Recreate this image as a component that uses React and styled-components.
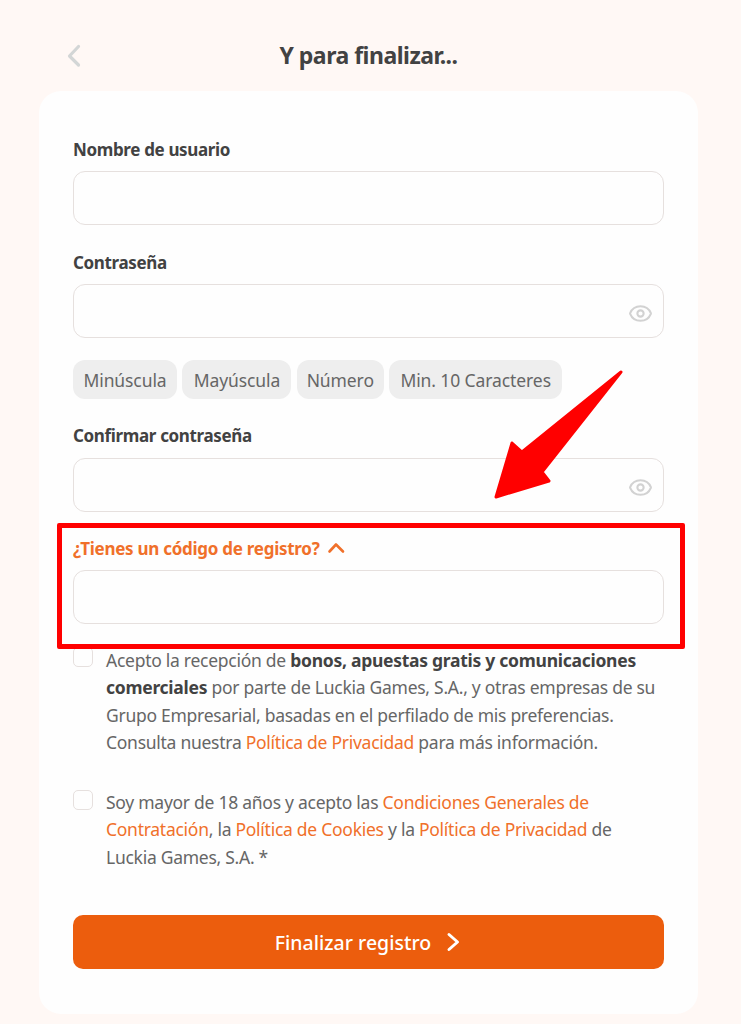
import React from "react";
import styled, { createGlobalStyle } from "styled-components";
import { Eye } from "lucide-react";

const colors = {
  page: "#fff8f5",
  card: "#fefefe",
  text: "#424242",
  muted: "#666666",
  line: "#e6e0de",
  orange: "#ec5d0d",
  link: "#f0702a",
  red: "#ff0000",
};

const GlobalStyle = createGlobalStyle`
  html, body {
    margin: 0;
    padding: 0;
    background: ${colors.page};
  }
  * {
    box-sizing: border-box;
  }
`;

const Page = styled.div`
  position: relative;
  width: 741px;
  height: 1024px;
  overflow: hidden;
  padding: 0 43px 10px 39px;
  font-family: "Noto Sans", "Liberation Sans", sans-serif;
  color: ${colors.text};
`;

const Header = styled.header`
  position: relative;
  height: 91px;
  padding-top: 38px;
  text-align: center;
`;

const BackIcon = styled.svg`
  position: absolute;
  left: 26px;
  top: 43px;
`;

const Title = styled.h1`
  margin: 0;
  font-size: 23px;
  line-height: 34px;
  font-weight: 700;
  letter-spacing: -0.5px;
`;

const Card = styled.main`
  height: 923px;
  background: ${colors.card};
  border-radius: 22px;
  padding: 47px 34px 0;
`;

const Label = styled.label`
  display: block;
  font-size: 17px;
  line-height: 24px;
  font-weight: 700;
  letter-spacing: -0.35px;
  margin-bottom: ${(p) => p.$gap || 9}px;
`;

const Field = styled.div`
  position: relative;
  margin-bottom: ${(p) => p.$after || 0}px;
`;

const Input = styled.input`
  display: block;
  width: 100%;
  height: 54px;
  background: ${colors.card};
  border: 1.5px solid ${colors.line};
  border-radius: 12px;
  outline: none;
`;

const EyeIcon = styled(Eye)`
  position: absolute;
  right: 11px;
  top: 17px;
  color: #d2d2d2;
`;

const Chips = styled.div`
  display: flex;
  gap: 5.4px;
  margin: 22px 0 25px;
`;

const Chip = styled.span`
  height: 39px;
  width: ${(p) => p.$w}px;
  display: flex;
  align-items: center;
  justify-content: center;
  background: #eeeeee;
  border-radius: 12px;
  font-size: 17.5px;
  color: ${colors.muted};
  letter-spacing: -0.1px;
`;

const Toggle = styled.div`
  display: flex;
  align-items: center;
  gap: 7px;
  height: 24px;
  margin: 24px 0 10px;
  font-size: 17px;
  font-weight: 700;
  letter-spacing: -0.27px;
  color: ${colors.link};
`;

const Consent = styled.div`
  display: flex;
  gap: 13px;
  margin-top: ${(p) => p.$top}px;
`;

const Box = styled.span`
  flex: none;
  width: 20px;
  height: 20px;
  margin-top: ${(p) => p.$nudge || 0}px;
  border: 1.5px solid ${colors.line};
  border-radius: 5px;
  background: ${colors.card};
`;

const ConsentText = styled.p`
  margin: 0;
  width: 562px;
  font-size: 17.5px;
  line-height: 27.3px;
  letter-spacing: -0.27px;
  color: ${colors.muted};
  b {
    color: ${colors.text};
    font-weight: 700;
  }
  a {
    color: ${colors.link};
    text-decoration: none;
  }
`;

const Submit = styled.button`
  display: flex;
  align-items: center;
  justify-content: center;
  gap: 15px;
  width: 100%;
  height: 54px;
  margin-top: 44px;
  border: none;
  border-radius: 10px;
  background: ${colors.orange};
  color: #ffffff;
  font-family: inherit;
  font-size: 19.5px;
  font-weight: 500;
`;

const Highlight = styled.div`
  position: absolute;
  left: 57px;
  top: 523px;
  width: 628px;
  height: 126px;
  border: 5px solid ${colors.red};
  border-radius: 2px;
  pointer-events: none;
`;

const Arrow = styled.svg`
  position: absolute;
  left: 490px;
  top: 366px;
`;

const Stroke = ({ points, color, width }) => (
  <polyline
    points={points}
    fill="none"
    stroke={color}
    strokeWidth={width}
    strokeLinecap="round"
    strokeLinejoin="round"
  />
);

const App = () => (
  <Page>
    <GlobalStyle />
    <Header>
      <BackIcon width="18" height="26" viewBox="0 0 18 26">
        <Stroke points="13.5,3.5 4.5,13 13.5,22" color="#d3d6d6" width={3.2} />
      </BackIcon>
      <Title>Y para finalizar...</Title>
    </Header>
    <Card>
      <Label>Nombre de usuario</Label>
      <Field $after={26}>
        <Input />
      </Field>
      <Label>Contraseña</Label>
      <Field>
        <Input type="password" />
        <EyeIcon size={25} strokeWidth={2} />
      </Field>
      <Chips>
        <Chip $w={104}>Minúscula</Chip>
        <Chip $w={109}>Mayúscula</Chip>
        <Chip $w={87}>Número</Chip>
        <Chip $w={173}>Min. 10 Caracteres</Chip>
      </Chips>
      <Label $gap={10}>Confirmar contraseña</Label>
      <Field>
        <Input type="password" />
        <EyeIcon size={25} strokeWidth={2} />
      </Field>
      <Toggle>
        ¿Tienes un código de registro?
        <svg width="18" height="12" viewBox="0 0 18 12">
          <Stroke points="2.5,9.5 9,2.5 16,9.5" color={colors.link} width={2.6} />
        </svg>
      </Toggle>
      <Field>
        <Input />
      </Field>
      <Consent $top={23}>
        <Box />
        <ConsentText>
          Acepto la recepción de <b>bonos, apuestas gratis y comunicaciones</b>
          <br />
          <b>comerciales</b> por parte de Luckia Games, S.A., y otras empresas de su
          <br />
          Grupo Empresarial, basadas en el perfilado de mis preferencias.
          <br />
          Consulta nuestra <a href="#p">Política de Privacidad</a> para más información.
        </ConsentText>
      </Consent>
      <Consent $top={33}>
        <Box $nudge={1} />
        <ConsentText>
          Soy mayor de 18 años y acepto las <a href="#c">Condiciones Generales de</a>
          <br />
          <a href="#c">Contratación</a>, la <a href="#k">Política de Cookies</a> y la{" "}
          <a href="#p">Política de Privacidad</a> de
          <br />
          Luckia Games, S.A. *
        </ConsentText>
      </Consent>
      <Submit>
        Finalizar registro
        <svg width="16" height="20" viewBox="0 0 16 20">
          <Stroke points="3,2.5 11.5,10 3,17.5" color="#ffffff" width={3} />
        </svg>
      </Submit>
    </Card>
    <Highlight />
    <Arrow width="140" height="140" viewBox="490 366 140 140">
      <path
        d="M621 372 L542 472 L549 481 L496 497 L512 443 L522 452 Z"
        fill={colors.red}
        stroke={colors.red}
        strokeWidth="3"
        strokeLinejoin="round"
      />
    </Arrow>
  </Page>
);

export default App;
